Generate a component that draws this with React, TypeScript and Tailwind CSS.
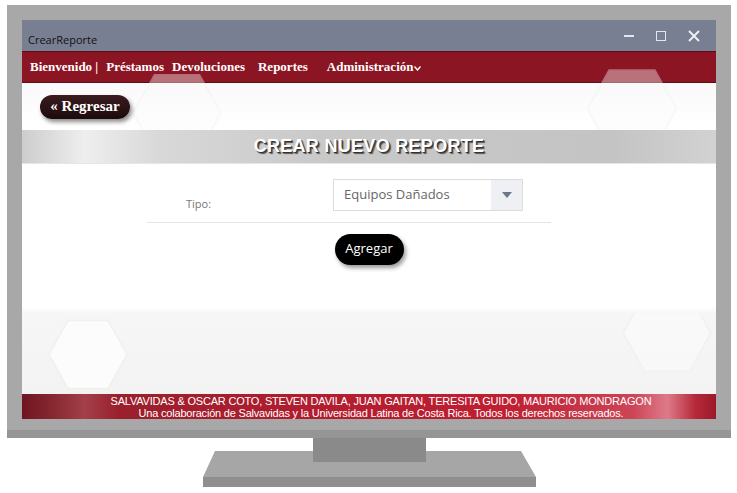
import React from "react";

const navItems = ["Préstamos", "Devoluciones", "Reportes"];

const Hexagon = ({ className }: { className: string }) => (
  <svg className={className} viewBox="0 0 80 70" fill="none">
    <polygon points="20,1 60,1 79,35 60,69 20,69 1,35" fill="#fcfcfc" stroke="#f0f0f0" strokeWidth="1.5" />
  </svg>
);

const MonitorStand = () => (
  <svg width="737" height="55" viewBox="0 0 737 55" className="block">
    <polygon points="215,13 521,13 536,39 203,39" fill="#a6a6a6" />
    <rect x="203" y="39" width="333" height="10" fill="#8f8f8f" />
    <rect x="313" y="0" width="113" height="24" fill="#8a8a8a" />
  </svg>
);

const App = () => {
  return (
    <div className="w-[737px] h-[493px] bg-white overflow-hidden">
      <div className="pt-[5px] pl-[7px]">
        {/* monitor frame */}
        <div className="w-[724px] bg-[#a8a8a8] px-[15px] pt-[15px] pb-[11px] border-b-[8px] border-[#959595]">
          <div className="w-[694px] flex flex-col bg-white">
            {/* title bar */}
            <div className="h-[31px] bg-[#787f92] flex items-end justify-between pb-[6px] pl-[6px] pr-[16px]">
              <span className="text-[11px] text-[#111] font-['Open_Sans',sans-serif] leading-none">CrearReporte</span>
              <div className="flex items-center gap-[22px] pb-[3px] text-[#e4e6ee]">
                <div className="w-[10px] h-[1.5px] bg-[#e4e6ee]" />
                <div className="w-[10px] h-[10px] border-[1.5px] border-[#e4e6ee]" />
                <svg width="12" height="12" viewBox="0 0 12 12">
                  <path d="M1 1L11 11M11 1L1 11" stroke="#f2f3f7" strokeWidth="1.8" />
                </svg>
              </div>
            </div>

            {/* nav bar */}
            <div className="h-[32px] bg-[#8c1524] border-y border-[#5c0d17] flex items-center pl-[8px] font-['Liberation_Serif',serif] font-bold text-[13px] text-white">
              <span className="mr-[8px]">Bienvenido |</span>
              <span className="mr-[8px]">{navItems[0]}</span>
              <span className="mr-[13px]">{navItems[1]}</span>
              <span className="mr-[19px]">{navItems[2]}</span>
              <span className="flex items-center">
                Administración
                <svg width="7" height="5" viewBox="0 0 7 5" className="ml-[1px] mt-[3px]">
                  <path d="M0.5 0.5L3.5 4L6.5 0.5" stroke="white" strokeWidth="1.4" fill="none" />
                </svg>
              </span>
            </div>

            {/* content */}
            <div className="relative h-[311px] flex flex-col bg-[linear-gradient(180deg,#f9f9f9_0%,#ffffff_14%,#ffffff_72%,#f6f6f6_74%,#f3f3f3_100%)]">
              <Hexagon className="absolute left-[110px] top-[-10px] w-[90px] h-[80px] opacity-40" />
              <Hexagon className="absolute left-[560px] top-[-14px] w-[100px] h-[80px] opacity-40" />

              <div className="relative pt-[10px] pl-[18px]">
                <button className="h-[24px] w-[90px] rounded-full bg-[linear-gradient(180deg,#3a1c1f,#1c0a0c)] text-white font-['Liberation_Serif',serif] font-bold text-[15px] leading-none shadow-[2px_3px_4px_rgba(0,0,0,0.45)]">
                  « Regresar
                </button>
              </div>

              <div className="relative mt-[11px] h-[34px] flex items-center justify-center border-b border-[#e6e6e6] bg-[linear-gradient(90deg,#cdcdcd_0%,#eeeeee_9%,#d8d8d8_20%,#c8c8c8_45%,#c4c4c4_85%,#d2d2d2_100%)]">
                <span className="font-['Liberation_Sans',sans-serif] font-bold text-[18px] text-white tracking-[0.3px] [text-shadow:1px_1px_0_#333,2px_2px_1px_#555]">
                  CREAR NUEVO REPORTE
                </span>
              </div>

              <div className="relative ml-[125px] w-[404px] mt-[15px] pb-[11px] border-b border-[#e4e4e4] flex items-end font-['Open_Sans',sans-serif]">
                <span className="w-[186px] pl-[39px] mb-[-2px] text-[11px] text-[#777]">Tipo:</span>
                <div className="w-[190px] h-[32px] border border-[#dcdcdc] bg-white flex">
                  <span className="flex-1 pl-[10px] flex items-center text-[13px] text-[#666]">Equipos Dañados</span>
                  <div className="w-[31px] bg-[#eff0f4] flex items-center justify-center">
                    <svg width="10" height="6" viewBox="0 0 10 6">
                      <polygon points="0,0 10,0 5,6" fill="#6b768a" />
                    </svg>
                  </div>
                </div>
              </div>

              <div className="relative flex justify-center mt-[11px]">
                <button className="h-[31px] w-[69px] rounded-full bg-black text-white text-[13px] font-['Open_Sans',sans-serif] shadow-[2px_3px_4px_rgba(0,0,0,0.4)]">
                  Agregar
                </button>
              </div>

              <div className="relative mt-auto h-[81px] overflow-hidden">
                <Hexagon className="absolute left-[26px] top-[4px] w-[80px] h-[75px]" />
                <Hexagon className="absolute left-[600px] top-[-20px] w-[90px] h-[80px] opacity-60" />
              </div>
            </div>

            {/* footer */}
            <div className="h-[25px] pl-[24px] flex flex-col items-center justify-center font-['Liberation_Sans',sans-serif] text-white leading-[12px] bg-[linear-gradient(90deg,#6f1520_0%,#8a2a33_5%,#a3404a_9%,#9a1f2c_14%,#b01d2f_40%,#bf1f31_70%,#cc4556_88%,#de7a88_93%,#b52a3b_97%,#9c1828_100%)]">
              <span className="text-[11px] tracking-[-0.2px]">SALVAVIDAS &amp; OSCAR COTO, STEVEN DAVILA, JUAN GAITAN, TERESITA GUIDO, MAURICIO MONDRAGON</span>
              <span className="text-[11px] tracking-[-0.2px]">Una colaboración de Salvavidas y la Universidad Latina de Costa Rica. Todos los derechos reservados.</span>
            </div>
          </div>
        </div>
      </div>
      <MonitorStand />
    </div>
  );
};

export default App;
